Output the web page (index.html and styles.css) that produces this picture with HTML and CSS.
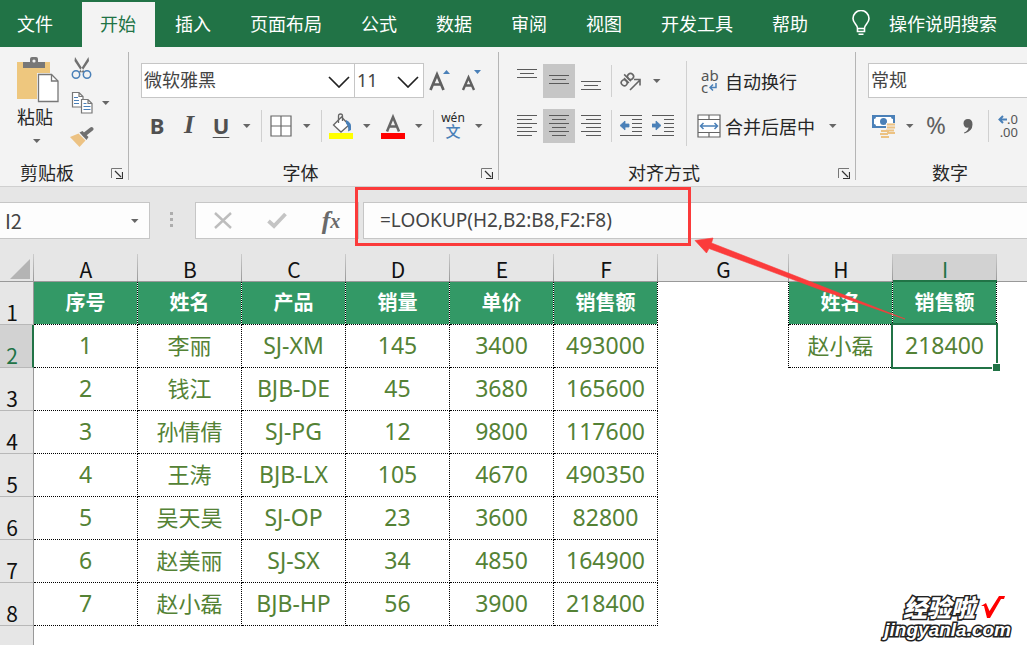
FILE: index.html
```html
<!DOCTYPE html>
<html lang="zh-CN">
<head>
<meta charset="utf-8">
<title>工作簿</title>
<link rel="stylesheet" href="styles.css">
</head>
<body>
<svg class="defs" aria-hidden="true">
  <symbol id="caret" viewBox="0 0 8 4"><path d="M0 0h7.5L3.75 4z" fill="#666"/></symbol>
  <symbol id="chevron" viewBox="0 0 22 12"><path d="M1 1l10 10L21 1" fill="none" stroke="#222" stroke-width="1.7"/></symbol>
  <symbol id="launcher" viewBox="0 0 12 11"><path d="M.5 10V.5H11" fill="none" stroke="#777"/><path d="M4 3l6 6M11.5 4v6.5H5" fill="none" stroke="#333" stroke-width="1.2"/></symbol>
</svg>
<div class="app">
  <nav class="tabs" aria-label="功能区">
    <button class="tab file">文件</button>
    <button class="tab active">开始</button>
    <button class="tab">插入</button>
    <button class="tab">页面布局</button>
    <button class="tab">公式</button>
    <button class="tab">数据</button>
    <button class="tab">审阅</button>
    <button class="tab">视图</button>
    <button class="tab">开发工具</button>
    <button class="tab">帮助</button>
    <button class="tell">
      <svg width="18" height="26" viewBox="0 0 18 26" fill="none" stroke="#fff" stroke-width="1.6"><path d="M5.5 18.5c0-4-4.500-5-4.500-10a8 8 0 0 1 16 0c0 5-4.500 6-4.500 10zM5.500 18.500v3h7v-3M6.500 24.200h5"/></svg>
      <span>操作说明搜索</span>
    </button>
  </nav>

  <div class="ribbon">
    <section class="group clipboard">
      <div class="body clip-body">
        <button class="paste">
          <svg width="42" height="48" viewBox="0 0 42 48"><path d="M0 6h33v37H0z" fill="#eec77e" /><path d="M6 12V6h7V3q0-2 2-2h4q2 0 2 2v3h7v6z" fill="#777"/><circle cx="17" cy="5" r="1.600" fill="#f3f3f3"/><path d="M20 17h15l7 7v23H20z" fill="#f3f3f3"/><path d="M21.500 18.500h13l6.500 6.500v20.500H21.500z" fill="#fff" stroke="#777" stroke-width="1.300"/><path d="M34.500 18.500V25H41" fill="none" stroke="#777" stroke-width="1.300"/></svg>
          <span>粘贴</span>
          <svg class="caret"><use href="#caret"/></svg>
        </button>
        <div class="clip-tools">
          <button class="icon" aria-label="剪切"><svg width="22" height="24" viewBox="0 0 22 24"><path d="M4 1l9.500 15-2.300.5L3.500 5zM17.500 1L8 16l2.300.5L18 5z" fill="#707070"/><circle cx="5" cy="18.500" r="3.700" fill="none" stroke="#4a80b8" stroke-width="1.500"/><circle cx="16" cy="18.500" r="3.700" fill="none" stroke="#4a80b8" stroke-width="1.500"/></svg></button>
          <div class="row">
            <button class="icon" aria-label="复制"><svg width="22" height="24" viewBox="0 0 22 24" fill="#fff" stroke="#777" stroke-width="1.200"><path d="M1.500 1.500h6.500l4 4v10.500H1.500zM8 1.500v4h4"/><path d="M3 6.500h4M3 9.500h5M3 12.500h5" stroke="#4a80b8"/><path d="M10.500 8.500h6.500l4 4v9.500H10.500zM17 8.500v4h4"/><path d="M12.500 12.500h3M12.500 15.500h7M12.500 18.500h7" stroke="#4a80b8"/></svg></button>
            <button class="drop" aria-label="复制选项"><svg class="caret"><use href="#caret"/></svg></button>
          </div>
          <button class="icon" aria-label="格式刷"><svg width="24" height="22" viewBox="0 0 24 22"><path d="M0 11l8.500-3.500 7 7L9.500 21z" fill="#ecc283"/><path d="M9.500 6.500l3-1.500 6 6-2 3z" fill="#707070"/><path d="M14.500 8.500l7-5.500" stroke="#707070" stroke-width="4" stroke-linecap="round"/></svg></button>
        </div>
      </div>
      <footer><h2>剪贴板</h2><button class="launch" aria-label="剪贴板设置"><svg width="12" height="11"><use href="#launcher"/></svg></button></footer>
    </section>

    <section class="group font">
      <div class="body">
        <div class="row">
          <label class="combo name"><select aria-label="字体"><option>微软雅黑</option></select><svg class="chev"><use href="#chevron"/></svg></label>
          <label class="combo size"><select aria-label="字号"><option>11</option></select><svg class="chev"><use href="#chevron"/></svg></label>
          <button class="icon" aria-label="增大字号"><svg width="24" height="24" viewBox="0 0 24 24"><path d="M2.500 21L9 5.500 15.500 21M5 15.500h8" fill="none" stroke="#606060" stroke-width="2.700"/><path d="M15 5l3.500-4L22 5z" fill="#4a80b8"/></svg></button>
          <button class="icon" aria-label="减小字号"><svg width="24" height="24" viewBox="0 0 24 24"><path d="M3 21L8.500 8.500 14 21M5 16.500h7" fill="none" stroke="#606060" stroke-width="2.400"/><path d="M14 1h7l-3.500 4z" fill="#4a80b8"/></svg></button>
        </div>
        <div class="row">
          <button class="icon glyph bold">B</button>
          <button class="icon glyph ital">I</button>
          <button class="icon glyph under">U</button>
          <button class="drop" aria-label="下划线选项"><svg class="caret"><use href="#caret"/></svg></button>
          <i class="sep"></i>
          <button class="icon" aria-label="边框"><svg width="22" height="22" viewBox="0 0 22 22" fill="#fff" stroke="#666" stroke-width="1.200"><path d="M1 1h20v20H1zM11 1v20M1 11h20"/></svg></button>
          <button class="drop" aria-label="边框选项"><svg class="caret"><use href="#caret"/></svg></button>
          <i class="sep"></i>
          <button class="icon" aria-label="填充颜色"><svg width="24" height="26" viewBox="0 0 24 26"><path d="M0 20h24v6H0z" fill="#ff0"/><path d="M4.500 12l8-8 7.500 8-8 7z" fill="#fff" stroke="#666" stroke-width="1.300"/><path d="M9.500 10V3q0-2 2-2t2 2v5" fill="none" stroke="#666" stroke-width="1.300"/><path d="M17 7q6 2 5 10l-3 1.500q1-5-2-8z" fill="#4a80b8"/></svg></button>
          <button class="drop" aria-label="填充选项"><svg class="caret"><use href="#caret"/></svg></button>
          <button class="icon" aria-label="字体颜色"><svg width="24" height="26" viewBox="0 0 24 26"><path d="M0 20h24v6H0z" fill="red"/><path d="M6 18.500l6-14.500 6 14.500M8 13.500h8" fill="none" stroke="#666" stroke-width="2.500"/></svg></button>
          <button class="drop" aria-label="颜色选项"><svg class="caret"><use href="#caret"/></svg></button>
          <i class="sep"></i>
          <button class="icon pinyin"><span>wén</span><b>文</b></button>
          <button class="drop" aria-label="拼音选项"><svg class="caret"><use href="#caret"/></svg></button>
        </div>
      </div>
      <footer><h2>字体</h2><button class="launch" aria-label="字体设置"><svg width="12" height="11"><use href="#launcher"/></svg></button></footer>
    </section>

    <section class="group align">
      <div class="body split">
        <div class="rows">
          <div class="row">
            <button class="icon" aria-label="顶端对齐"><svg width="22" height="24" viewBox="0 0 22 24" stroke="#5a5a5a"><path d="M1 .5h20M4 4.500h14M1 8.500h20"/></svg></button>
            <button class="icon on" aria-label="垂直居中"><svg width="22" height="24" viewBox="0 0 22 24" stroke="#5a5a5a"><path d="M1 6.500h20M4 10.500h14M1 14.500h20"/></svg></button>
            <button class="icon" aria-label="底端对齐"><svg width="22" height="24" viewBox="0 0 22 24" stroke="#5a5a5a"><path d="M1 12.500h20M4 16.500h14M1 20.500h20"/></svg></button>
            <i class="sep"></i>
            <button class="icon" aria-label="方向"><svg width="22" height="22" viewBox="0 0 22 22" fill="none" stroke="#666" stroke-width="1.600"><g transform="rotate(-45 7 10)"><ellipse cx="3" cy="10" rx="2.800" ry="3"/><path d="M6.200 6.500v7M9 4v9.500"/><ellipse cx="12" cy="10" rx="3" ry="3"/></g><path d="M10 20L20 10M14 9.500h6v6"/></svg></button>
            <button class="drop" aria-label="方向选项"><svg class="caret"><use href="#caret"/></svg></button>
          </div>
          <div class="row">
            <button class="icon" aria-label="左对齐"><svg width="22" height="24" viewBox="0 0 22 24" stroke="#5a5a5a"><path d="M1 1.500h20M1 5.500h15M1 9.500h20M1 13.500h15M1 17.500h20M1 21.500h15"/></svg></button>
            <button class="icon on" aria-label="居中"><svg width="22" height="24" viewBox="0 0 22 24" stroke="#5a5a5a"><path d="M1 1.500h20M4 5.500h14M1 9.500h20M4 13.500h14M1 17.500h20M4 21.500h14"/></svg></button>
            <button class="icon" aria-label="右对齐"><svg width="22" height="24" viewBox="0 0 22 24" stroke="#5a5a5a"><path d="M1 1.500h20M6 5.500h15M1 9.500h20M6 13.500h15M1 17.500h20M6 21.500h15"/></svg></button>
            <i class="sep"></i>
            <button class="icon" aria-label="减少缩进"><svg width="22" height="24" viewBox="0 0 22 24" stroke="#5a5a5a"><path d="M0 1.500h22M12 5.500h10M12 9.500h10M12 13.500h10M12 17.500h10M0 21.500h22"/><path d="M0 11.500L5 7v3h4v3H5v3z" fill="#4a80b8" stroke="#4a80b8" stroke-width=".8"/></svg></button>
            <button class="icon" aria-label="增加缩进"><svg width="22" height="24" viewBox="0 0 22 24" stroke="#5a5a5a"><path d="M0 1.500h22M12 5.500h10M12 9.500h10M12 13.500h10M12 17.500h10M0 21.500h22"/><path d="M9 11.500L4 7v3H0v3h4v3z" fill="#4a80b8" stroke="#4a80b8" stroke-width=".8"/></svg></button>
          </div>
        </div>
        <i class="divider"></i>
        <div class="rows">
          <div class="row">
            <button class="wide"><span class="abc"><span>ab</span><span>c<svg width="8" height="8" viewBox="0 0 8 8" fill="none" stroke="#4a80b8" stroke-width="1.500"><path d="M7 0v4.500H1M4 1.500l-3 3 3 3"/></svg></span></span><span>自动换行</span></button>
          </div>
          <div class="row">
            <button class="wide"><svg width="24" height="24" viewBox="0 0 24 24" fill="#fff" stroke="#666" stroke-width="1.200"><path d="M1 1h22v22H1zM1 5.500h22M1 18.500h22M12 1v4.500M12 18.500V23"/><path d="M3.500 12h17M6.500 9l-3 3 3 3M17.500 9l3 3-3 3" fill="none" stroke="#4a80b8" stroke-width="1.500"/></svg><span>合并后居中</span></button>
            <button class="drop" aria-label="合并选项"><svg class="caret"><use href="#caret"/></svg></button>
          </div>
        </div>
      </div>
      <footer><h2>对齐方式</h2><button class="launch" aria-label="对齐设置"><svg width="12" height="11"><use href="#launcher"/></svg></button></footer>
    </section>

    <section class="group number">
      <div class="body">
        <div class="row"><label class="combo format"><select aria-label="数字格式"><option>常规</option></select></label></div>
        <div class="row">
          <button class="icon" aria-label="会计数字格式"><svg width="24" height="24" viewBox="0 0 24 24"><path d="M0 1h23v13H0z" fill="#4a80b8"/><path d="M4 3h15q0 2 2 2v5q-2 0-2 2H4q0-2-2-2V5q2 0 2-2z" fill="#fff"/><circle cx="11.500" cy="7.500" r="3.500" fill="#4a80b8"/><path d="M14 9h10v11H14zM8 16h10v8H8z" fill="#f3f3f3"/><g fill="none" stroke="#ecc283" stroke-width="2.200"><path d="M15 10.500h8M15 13.500h8M14 16.500h8M15 19h8M9 17h8M8 20h8M9 23h8"/></g></svg></button>
          <button class="drop" aria-label="货币选项"><svg class="caret"><use href="#caret"/></svg></button>
          <button class="icon glyph pct">%</button>
          <button class="icon" aria-label="千位分隔样式"><svg width="10" height="16" viewBox="0 0 10 16"><path d="M1 14.500q4-1.500 4.500-5Q1 10.500.5 5.500.5 1 5 1t4.500 5.500Q9.500 13 1.500 15.500z" fill="#606060"/></svg></button>
          <i class="sep"></i>
          <button class="icon decimals"><span><svg width="9" height="9" viewBox="0 0 9 9" fill="none" stroke="#4a80b8" stroke-width="2"><path d="M9 4.500H1.500M5 1L1.500 4.500 5 8"/></svg>.0</span><span>.00</span></button>
        </div>
      </div>
      <footer><h2>数字</h2></footer>
    </section>
  </div>

  <div class="formula-bar">
    <div class="namebox"><input aria-label="名称框" value="I2"><svg class="caret"><use href="#caret"/></svg></div>
    <div class="grip"><i></i><i></i><i></i></div>
    <div class="fx-tools">
      <button aria-label="取消"><svg width="18" height="17" viewBox="0 0 18 17" fill="none" stroke="#bdbdbd" stroke-width="2.400"><path d="M1 1l16 15M17 1L1 16"/></svg></button>
      <button aria-label="输入"><svg width="20" height="17" viewBox="0 0 20 17" fill="none" stroke="#c4c4c4" stroke-width="3.800"><path d="M1.500 9l5.500 5L18.500 2"/></svg></button>
      <button class="fx" aria-label="插入函数"><i>f</i><i class="x">x</i></button>
    </div>
    <input class="formula" aria-label="编辑栏" value="=LOOKUP(H2,B2:B8,F2:F8)">
    <div class="callout"></div>
  </div>

  <main class="sheet">
    <table>
      <colgroup><col class="c-head"><col><col><col><col><col><col><col class="c-gap"><col><col><col class="c-rest"></colgroup>
      <thead><tr>
        <th class="corner"><svg width="20" height="20" viewBox="0 0 20 20"><path d="M20 0v20H0z" fill="#b4b4b4"/></svg></th>
        <th>A</th><th>B</th><th>C</th><th>D</th><th>E</th><th>F</th><th>G</th><th>H</th><th class="sel">I</th><th class="last"></th>
      </tr></thead>
      <tbody>
        <tr class="title"><th>1</th><td>序号</td><td>姓名</td><td>产品</td><td>销量</td><td>单价</td><td>销售额</td><td class="gap dot"></td><td>姓名</td><td>销售额</td><td class="e"></td></tr>
        <tr><th class="sel">2</th><td>1</td><td class="zh">李丽</td><td>SJ-XM</td><td>145</td><td>3400</td><td>493000</td><td class="gap dot"></td><td class="zh">赵小磊</td><td class="picked">218400</td><td class="e"></td></tr>
        <tr><th>3</th><td>2</td><td class="zh">钱江</td><td>BJB-DE</td><td>45</td><td>3680</td><td>165600</td><td class="e" colspan="4"></td></tr>
        <tr><th>4</th><td>3</td><td class="zh">孙倩倩</td><td>SJ-PG</td><td>12</td><td>9800</td><td>117600</td><td class="e" colspan="4"></td></tr>
        <tr><th>5</th><td>4</td><td class="zh">王涛</td><td>BJB-LX</td><td>105</td><td>4670</td><td>490350</td><td class="e" colspan="4"></td></tr>
        <tr><th>6</th><td>5</td><td class="zh">吴天昊</td><td>SJ-OP</td><td>23</td><td>3600</td><td>82800</td><td class="e" colspan="4"></td></tr>
        <tr><th>7</th><td>6</td><td class="zh">赵美丽</td><td>SJ-SX</td><td>34</td><td>4850</td><td>164900</td><td class="e" colspan="4"></td></tr>
        <tr><th>8</th><td>7</td><td class="zh">赵小磊</td><td>BJB-HP</td><td>56</td><td>3900</td><td>218400</td><td class="e" colspan="4"></td></tr>
        <tr><th></th><td class="e" colspan="10"></td></tr>
      </tbody>
    </table>
  </main>

  <svg class="arrow" width="212" height="84" viewBox="0 0 212 84" aria-hidden="true"><path d="M1 3.500L19 1l-1.500 5L135 52 211 82 130 54 15 11.500l-2.500 4.500z" fill="#fb3b3b" stroke="#fb3b3b" stroke-width=".6"/></svg>

  <div class="mark">
    <div class="mark-top"><span>经验啦</span><svg width="24" height="24" viewBox="0 0 24 24"><path d="M0 11l5-3 3.500 8L18 1h6l-1 3h-3L9 23H6L3 11z" fill="red"/></svg></div>
    <div class="mark-url">jingyanla.com</div>
  </div>
</div>
</body>
</html>
```
FILE: styles.css
```css
* { box-sizing: border-box; }

body {
  margin: 0;
  font-family: "Noto Sans", "Noto Sans CJK SC", sans-serif;
  font-size: 18px;
  color: #262626;
  background: #fff;
}

button, input, select {
  font: inherit;
  color: inherit;
  margin: 0;
  padding: 0;
  border: 0;
  background: none;
  border-radius: 0;
}

svg { display: block; flex: none; }
.defs { position: absolute; width: 0; height: 0; }
.caret { width: 8px; height: 4px; }

.app {
  position: relative;
  height: 100vh;
  overflow: hidden;
  display: flex;
  flex-direction: column;
}

/* Tabs */
.tabs {
  flex: none;
  display: flex;
  gap: 1px;
  height: 47px;
  padding-top: 2px;
  background: #217346;
  color: #fff;
  white-space: nowrap;
}
.tab { padding: 0 19px 4px; font-family: "Noto Sans CJK SC", sans-serif; }
.tab.file { padding: 0 28px 4px 17px; }
.tab.active { background: #f3f3f3; color: #217346; padding-left: 18px; }
.tell {
  display: flex;
  align-items: center;
  gap: 19px;
  padding: 0 0 4px 24px;
  font-family: "Noto Sans CJK SC", sans-serif;
}

/* Ribbon */
.ribbon {
  flex: none;
  display: flex;
  height: 140px;
  background: #f3f3f3;
  border-bottom: 1px solid #d0d0d0;
  overflow: hidden;
}
.group {
  display: flex;
  flex-direction: column;
  margin: 5px 0 6px;
  border-right: 1px solid #b5b5b5;
}
.clipboard { flex: 0 0 129px; }
.font { flex: 0 0 370px; }
.align { flex: 0 0 357px; }
.number { flex: 1 0 214px; border-right: 0; }

.body {
  flex: 1;
  display: flex;
  flex-direction: column;
  gap: 10px;
  padding: 11px 0 0 12px;
}
.body.split { flex-direction: row; gap: 0; }
.rows { display: flex; flex-direction: column; gap: 10px; }
.row { display: flex; align-items: center; height: 35px; }

.group footer {
  position: relative;
  height: 19px;
  padding-right: 26px;
  text-align: center;
}
.clipboard footer { padding-right: 34px; }
h2 {
  margin: 0;
  font-size: 18px;
  font-weight: 400;
  line-height: 24px;
}
.launch { position: absolute; right: 5px; bottom: 1px; }
.launch svg { width: 12px; height: 11px; }

.icon {
  flex: none;
  width: 32px;
  height: 34px;
  display: flex;
  align-items: center;
  justify-content: center;
}
.icon.on { background: #c6c6c6; }
.drop {
  flex: none;
  width: 20px;
  height: 34px;
  display: flex;
  align-items: center;
  justify-content: center;
}
.sep { flex: none; width: 8px; height: 32px; border-left: 1px solid #d0d0d0; margin-left: 4px; margin-right: -4px; }
.divider { width: 1px; height: 85px; margin: -2px 10px 0 7px; background: #d0d0d0; }

.glyph { font-weight: 700; font-size: 22px; color: #505050; padding-bottom: 2px; }
.ital { font-family: "Liberation Serif", serif; font-style: italic; font-size: 26px; }
.under { text-decoration: underline; text-decoration-thickness: 1px; text-underline-offset: 3px; }
.pct { font-weight: 400; font-size: 24px; color: #606060; }

.pinyin { flex-direction: column; font-size: 12px; line-height: 12px; }
.pinyin b { font-weight: 500; font-size: 15px; line-height: 15px; color: #4a80b8; }

.decimals { flex-direction: column; align-items: flex-end; padding-right: 6px; font-size: 13px; line-height: 13px; color: #555; }
.decimals span { display: flex; align-items: center; }

.wide { display: flex; align-items: center; gap: 4px; height: 34px; white-space: nowrap; }
.wide + .drop { margin-left: 8px; }
.abc { display: flex; flex-direction: column; width: 24px; padding-left: 4px; font-size: 15px; line-height: 12px; text-align: left; color: #555; }
.abc span { display: flex; align-items: center; gap: 1px; }

.combo { position: relative; height: 35px; background: #fff; border: 1px solid #c6c6c6; display: flex; }
.combo select { width: 100%; padding: 0 0 2px 2px; appearance: none; outline: 0; color: #444; }
.combo.name { width: 214px; }
.combo.size { width: 70px; margin-left: -1px; }
.combo.format { width: 100%; }
.chev { position: absolute; right: 4px; top: 12px; width: 22px; height: 12px; pointer-events: none; }

.clip-body { flex-direction: row; gap: 11px; padding: 4px 0 0 17px; }
.paste { display: flex; flex-direction: column; align-items: center; width: 42px; }
.paste span { line-height: 26px; margin: 0 6px 9px 0; }
.paste .caret { margin-right: 2px; }
.clip-tools { display: flex; flex-direction: column; }
.clip-tools .icon { width: 24px; height: 35px; align-items: flex-start; }
.clip-tools .row { height: 35px; }
.clip-tools .drop { margin-left: 2px; height: 24px; align-self: flex-start; }

/* Formula bar */
.formula-bar {
  flex: none;
  position: relative;
  display: flex;
  align-items: flex-start;
  height: 67px;
  padding-top: 15px;
  background: #e6e6e6;
}
.namebox {
  display: flex;
  align-items: center;
  width: 150px;
  height: 37px;
  padding: 0 10px 0 5px;
  background: #fdfdfd;
  border: 1px solid #c6c6c6;
  border-left: 0;
}
.namebox input { flex: 1; min-width: 0; outline: 0; color: #444; font-family: "Noto Sans CJK SC", sans-serif; font-size: 20px; }
.grip { display: flex; flex-direction: column; align-items: center; gap: 3px; width: 45px; padding: 10px 2px 0 0; }
.grip i { width: 3px; height: 3px; background: #adadad; }
.fx-tools {
  display: flex;
  width: 164px;
  height: 37px;
  background: #fdfdfd;
  border: 1px solid #c6c6c6;
}
.fx-tools button { width: 54px; display: flex; align-items: center; justify-content: center; }
.fx { font-family: "Liberation Serif", serif; font-size: 26px; line-height: 26px; font-weight: 700; color: #6a6a6a; }
.fx .x { font-size: 20px; }
.formula {
  flex: 1;
  min-width: 0;
  height: 37px;
  margin-left: 4px;
  padding: 0 0 2px 16px;
  background: #fdfdfd;
  border: 1px solid #c6c6c6;
  border-right: 0;
  outline: 0;
  font-size: 19px;
  color: #444;
}
.callout { position: absolute; left: 355px; top: 0; width: 336px; height: 59px; border: 3px solid #fb3b3b; }

/* Sheet */
.sheet { flex: 1 1 0; min-height: 0; overflow: hidden; }
table { width: 100%; table-layout: fixed; border-collapse: separate; border-spacing: 0; }
col { width: 104px; }
.c-head { width: 34px; }
.c-gap { width: 131px; }
.c-rest { width: auto; }

th { padding: 0; font-family: "Noto Sans CJK SC", sans-serif; font-weight: 400; color: #111; background: #e6e6e6; line-height: 24px; font-size: 21px; }
thead th {
  height: 28px;
  padding-top: 3px;
  border-bottom: 1px solid #999;
  background: linear-gradient(#ccc, #999) right / 1px 100% no-repeat #e6e6e6;
}
thead th.last { background: #e6e6e6; }
thead th.sel { background-color: #d2d2d2; color: #217346; border-bottom-color: #217346; box-shadow: inset 0 -1px #217346; }
.corner svg { margin: 0 0 0 10px; }

tbody tr { height: 43px; }
tbody th {
  padding-right: 9px;
  vertical-align: bottom;
  border-right: 1px solid #999;
  border-bottom: 1px solid #b8b8b8;
}
tbody th.sel { background: #d2d2d2; color: #217346; border-right: 2px solid #217346; padding-right: 8px; }
td {
  padding: 0 0 2px;
  text-align: center;
  font-size: 23px;
  line-height: 28px;
  color: #548235;
  border-right: 1px dotted #000;
  border-bottom: 1px dotted #000;
  background-clip: padding-box;
}
td.zh { font-size: 22px; }
.title td { padding: 0; font-size: 20px; font-weight: 700; color: #fff; background-color: #339966; }
td.gap { background: none; border-bottom: 0; }
td.e { background: none; border: 0; }
.title td.e, .title td.gap { background: none; }

.picked { position: relative; }
.picked::before { content: ""; position: absolute; inset: -2px -2px -2px -2px; border: 2px solid #217346; }
.picked::after { content: ""; position: absolute; right: -4px; bottom: -4px; width: 7px; height: 7px; background: #217346; border: 1px solid #fff; border-width: 1px 0 0 1px; }

.arrow { position: absolute; left: 694px; top: 237px; }

/* Watermark */
.mark { position: absolute; right: 16px; bottom: 6px; font-weight: 900; font-style: italic; color: #fff; -webkit-text-stroke: 3px #222; paint-order: stroke fill; }
.mark-top { display: flex; justify-content: flex-end; gap: 6px; padding-right: 6px; font-size: 24px; line-height: 26px; }
.mark-url { font-family: "Liberation Sans", sans-serif; font-size: 19px; line-height: 18px; }
```
